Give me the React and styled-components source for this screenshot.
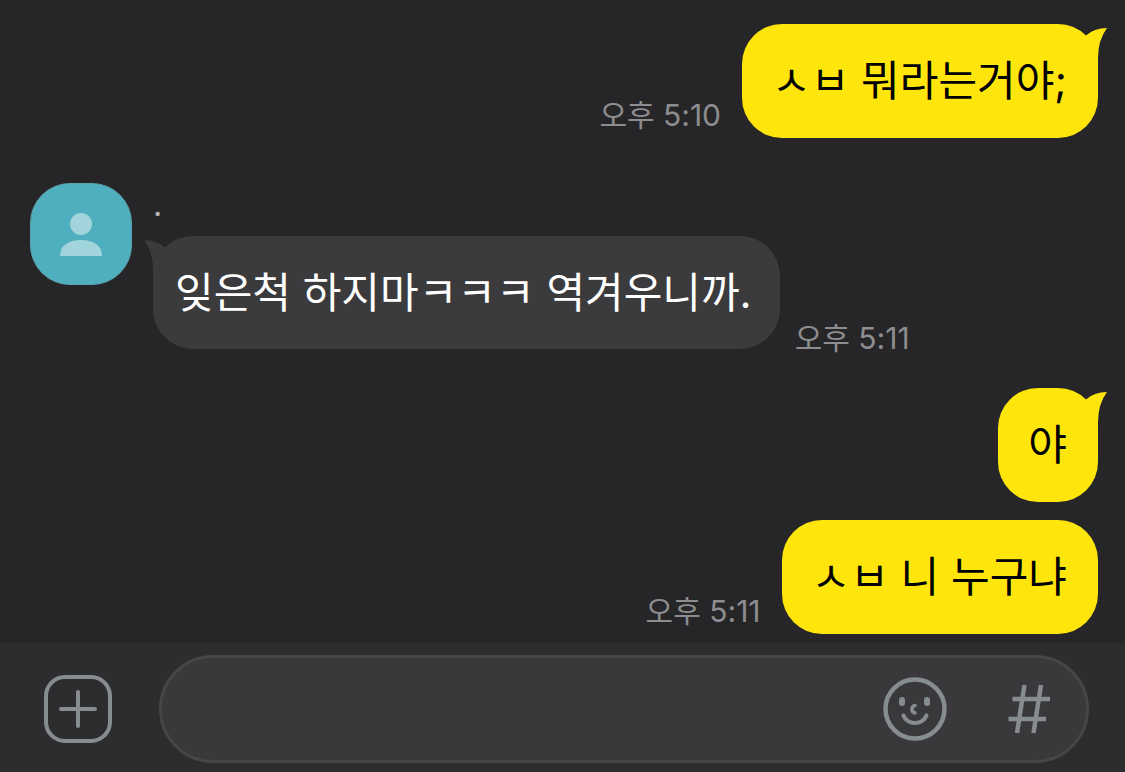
import styled, { createGlobalStyle } from 'styled-components';

const messages = [
  { id: 1, mine: true, text: 'ㅅㅂ 뭐라는거야;', time: '오후 5:10', tail: true, space: 0 },
  { id: 2, mine: false, name: '.', text: '잊은척 하지마ㅋㅋㅋ 역겨우니까.', time: '오후 5:11', tail: true, space: 45 },
  { id: 3, mine: true, text: '야', tail: true, space: 39 },
  { id: 4, mine: true, text: 'ㅅㅂ 니 누구냐', time: '오후 5:11', space: 18 },
]

const Tail = ({ mine }) => (
  <TailSvg $mine={mine} viewBox="0 0 34 40" aria-hidden="true">
    <path d="M12 11.5 Q20 4 33 4 Q24 16 24 34 L24 40 L8 30 Z" />
  </TailSvg>
)

const Message = ({ message }) => {
  const { mine, name, text, time, tail, space } = message

  if (mine) {
    return (
      <MyRow $space={space}>
        {time && <Time $mine>{time}</Time>}
        <Bubble $mine>
          {text}
          {tail && <Tail mine />}
        </Bubble>
      </MyRow>
    )
  }

  return (
    <Row $space={space}>
      <Avatar>
        <svg width="42" height="44" viewBox="0 0 42 44" fill="#a1d4db" aria-hidden="true">
          <circle cx="21" cy="12" r="11" />
          <path d="M0 44 C0 33 9 28 21 28 C33 28 42 33 42 44 Z" />
        </svg>
      </Avatar>
      <Content>
        <Name>{name}</Name>
        <Line>
          <Bubble>
            {text}
            {tail && <Tail />}
          </Bubble>
          <Time>{time}</Time>
        </Line>
      </Content>
    </Row>
  )
}

const App = () => {
  return (
    <Page>
      <GlobalStyle />
      <Messages>
        {messages.map((message) => (
          <Message key={message.id} message={message} />
        ))}
      </Messages>
      <Composer>
        <AddButton type="button" aria-label="추가">
          <svg width="38" height="38" viewBox="0 0 38 38" stroke="currentColor" strokeWidth="4" strokeLinecap="round" aria-hidden="true">
            <path d="M19 2 V36 M2 19 H36" />
          </svg>
        </AddButton>
        <Field>
          <Input type="text" aria-label="메시지 입력" />
          <IconButton type="button" aria-label="이모티콘">
            <svg width="64" height="64" viewBox="0 0 64 64" fill="none" stroke="currentColor" strokeLinecap="round" aria-hidden="true">
              <circle cx="32" cy="32" r="29.5" strokeWidth="4.5" />
              <path d="M19 23 V26 M44 23 V26" strokeWidth="6" />
              <path d="M32 28.5 C27.8 29.5 27.8 35 32 36" strokeWidth="3.5" />
              <path d="M20.5 38.5 C24 48.5 40 48.5 43.5 38.5" strokeWidth="4" />
            </svg>
          </IconButton>
          <IconButton type="button" aria-label="샵검색">
            <svg width="64" height="64" viewBox="0 0 64 64" fill="none" stroke="currentColor" strokeWidth="4.5" aria-hidden="true">
              <path d="M27.5 8 L20 56 M44 8 L36.5 56 M15.5 22 H53 M11.5 42 H49" />
            </svg>
          </IconButton>
        </Field>
      </Composer>
    </Page>
  )
}

export default App

const GlobalStyle = createGlobalStyle`
  * {
    box-sizing: border-box;
  }

  body {
    margin: 0;
    background-color: #262628;
    font-family: Inter, "Noto Sans CJK KR", sans-serif;
  }
`;

const Page = styled.div`
  display: flex;
  flex-direction: column;
  min-height: 100vh;
  background-color: #262628;
`;

const Messages = styled.ul`
  flex: 1;
  list-style: none;
  margin: 0;
  padding: 24px 27px 9px 30px;
`;

const Row = styled.li`
  display: flex;
  align-items: flex-start;
  gap: 21px;
  margin-top: ${({ $space }) => $space}px;
`;

const MyRow = styled(Row)`
  justify-content: flex-end;
  align-items: flex-end;
`;

const Avatar = styled.div`
  display: flex;
  align-items: center;
  justify-content: center;
  flex-shrink: 0;
  width: 102px;
  height: 102px;
  border: 1px solid #5aa3ae;
  border-radius: 40px;
  background-color: #4fafbe;
`;

const Content = styled.div`
  display: flex;
  flex-direction: column;
`;

const Name = styled.span`
  padding-bottom: 9px;
  color: #b4b4b6;
  font-size: 32px;
  line-height: 44px;
`;

const Line = styled.div`
  display: flex;
  align-items: flex-end;
  gap: 15px;
`;

const Bubble = styled.div`
  position: relative;
  padding: ${({ $mine }) => ($mine ? '29px 31px 29px 30px' : '29px 28px 28px 22px')};
  border-radius: 40px;
  background-color: ${({ $mine }) => ($mine ? '#fee60d' : '#3b3b3d')};
  color: ${({ $mine }) => ($mine ? '#000000' : '#ffffff')};
  font-size: 42px;
  line-height: 56px;
`;

const TailSvg = styled.svg`
  position: absolute;
  top: 0;
  ${({ $mine }) => ($mine ? 'right: -10px;' : 'left: -10px; transform: scaleX(-1);')}
  width: 34px;
  height: 40px;
  fill: ${({ $mine }) => ($mine ? '#fee60d' : '#3b3b3d')};
`;

const Time = styled.span`
  padding-bottom: ${({ $mine }) => ($mine ? '12px' : '0')};
  color: #8d8d8f;
  font-size: 30px;
  line-height: 22px;
  white-space: nowrap;
`;

const Composer = styled.div`
  display: flex;
  align-items: center;
  gap: 47px;
  padding: 12px 36px 9px 44px;
  background-color: #2d2d2f;
`;

const AddButton = styled.button`
  display: flex;
  align-items: center;
  justify-content: center;
  flex-shrink: 0;
  width: 68px;
  height: 68px;
  padding: 0;
  border: 4px solid #878c8f;
  border-radius: 21px;
  background: none;
  color: #878c8f;
`;

const Field = styled.div`
  display: flex;
  align-items: center;
  flex: 1;
  gap: 50px;
  min-width: 0;
  height: 108px;
  padding: 0 25px 0 40px;
  border: 3px solid #464648;
  border-radius: 54px;
  background-color: #39393b;
`;

const Input = styled.input`
  flex: 1;
  min-width: 0;
  padding: 0;
  border: none;
  outline: none;
  background: none;
  color: #ffffff;
  font-family: inherit;
  font-size: 42px;
  line-height: 56px;
`;

const IconButton = styled.button`
  display: flex;
  flex-shrink: 0;
  padding: 0;
  border: none;
  background: none;
  color: #878c8f;
`;
